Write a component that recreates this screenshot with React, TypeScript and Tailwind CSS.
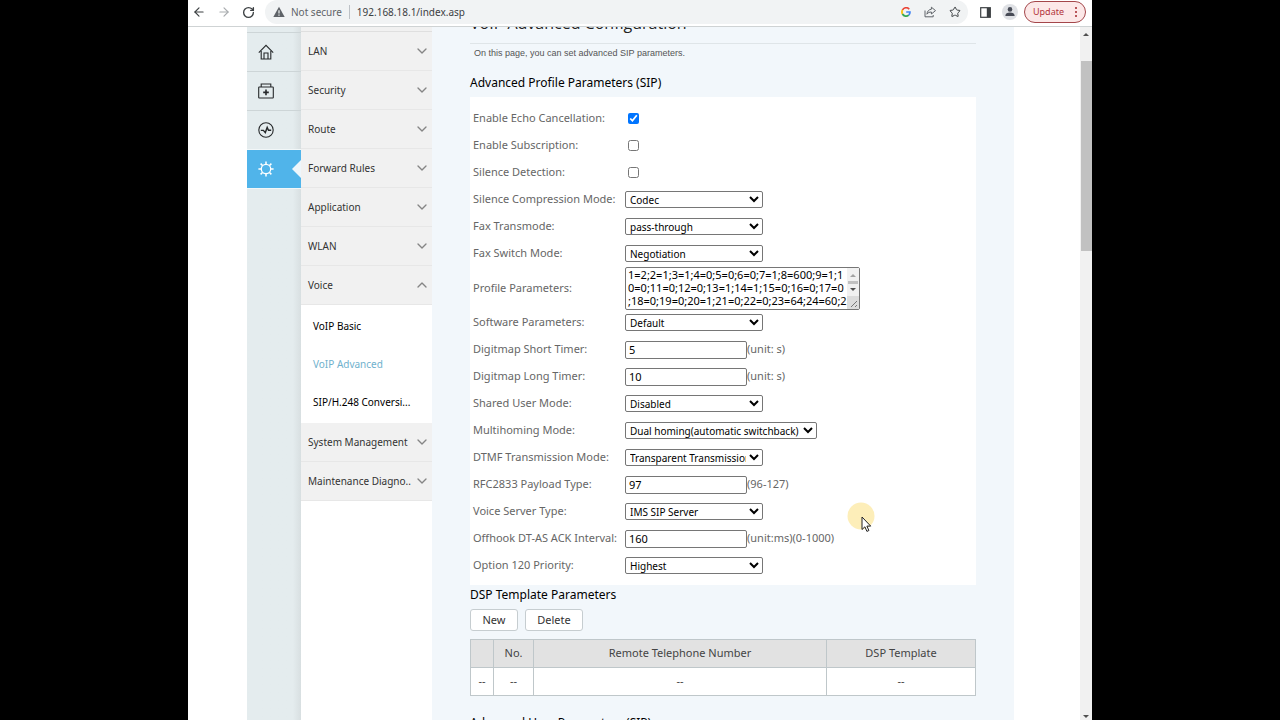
import React from 'react';
import { ArrowLeft, ArrowRight, ChevronDown, ChevronUp, RotateCw, Star } from 'lucide-react';

interface Field {
  id: string;
  label: string;
  type: 'checkbox' | 'select' | 'text' | 'textarea';
  value?: string;
  checked?: boolean;
  wide?: boolean;
  hint?: string;
}

const profileFields: Field[] = [
  { id: 'echo', label: 'Enable Echo Cancellation:', type: 'checkbox', checked: true },
  { id: 'subscription', label: 'Enable Subscription:', type: 'checkbox' },
  { id: 'silence', label: 'Silence Detection:', type: 'checkbox' },
  { id: 'compression', label: 'Silence Compression Mode:', type: 'select', value: 'Codec' },
  { id: 'faxTransmode', label: 'Fax Transmode:', type: 'select', value: 'pass-through' },
  { id: 'faxSwitch', label: 'Fax Switch Mode:', type: 'select', value: 'Negotiation' },
  {
    id: 'profile',
    label: 'Profile Parameters:',
    type: 'textarea',
    value: '1=2;2=1;3=1;4=0;5=0;6=0;7=1;8=600;9=1;1\n0=0;11=0;12=0;13=1;14=1;15=0;16=0;17=0\n;18=0;19=0;20=1;21=0;22=0;23=64;24=60;2',
  },
  { id: 'software', label: 'Software Parameters:', type: 'select', value: 'Default' },
  { id: 'shortTimer', label: 'Digitmap Short Timer:', type: 'text', value: '5', hint: '(unit: s)' },
  { id: 'longTimer', label: 'Digitmap Long Timer:', type: 'text', value: '10', hint: '(unit: s)' },
  { id: 'sharedUser', label: 'Shared User Mode:', type: 'select', value: 'Disabled' },
  { id: 'multihoming', label: 'Multihoming Mode:', type: 'select', value: 'Dual homing(automatic switchback)', wide: true },
  { id: 'dtmf', label: 'DTMF Transmission Mode:', type: 'select', value: 'Transparent Transmission' },
  { id: 'rfc2833', label: 'RFC2833 Payload Type:', type: 'text', value: '97', hint: '(96-127)' },
  { id: 'serverType', label: 'Voice Server Type:', type: 'select', value: 'IMS SIP Server' },
  { id: 'ackInterval', label: 'Offhook DT-AS ACK Interval:', type: 'text', value: '160', hint: '(unit:ms)(0-1000)' },
  { id: 'option120', label: 'Option 120 Priority:', type: 'select', value: 'Highest' },
];

const menuItems = [
  { name: 'LAN' },
  { name: 'Security' },
  { name: 'Route' },
  { name: 'Forward Rules' },
  { name: 'Application' },
  { name: 'WLAN' },
  { name: 'Voice', children: ['VoIP Basic', 'VoIP Advanced', 'SIP/H.248 Conversi...'] },
  { name: 'System Management' },
  { name: 'Maintenance Diagno..' },
];

const IconWarning = () => (
  <svg className="h-3 w-3 shrink-0" viewBox="0 0 12 12">
    <path d="M6 0.8 11.7 11H0.3z" fill="#5f6368" />
    <path d="M6 4.2v3.4M6 8.6v1.2" stroke="#f1f3f4" strokeWidth="1.2" />
  </svg>
);

const IconGoogle = () => (
  <svg className="h-[10px] w-[10px]" viewBox="0 0 10 10" fill="none" strokeWidth="1.7">
    <path d="M8.2 2.2A4 4 0 0 0 1.5 3" stroke="#ea4335" />
    <path d="M1.5 3a4 4 0 0 0 0 4" stroke="#fbbc05" />
    <path d="M1.5 7a4 4 0 0 0 6.2 1.1" stroke="#34a853" />
    <path d="M5.2 5H9a4 4 0 0 1-1.3 3.1" stroke="#4285f4" />
  </svg>
);

const IconShare = () => (
  <svg className="h-3 w-3" viewBox="0 0 12 12" fill="none" stroke="#5f6368" strokeWidth="1" strokeLinejoin="round">
    <path d="M1 4.5v6.3h8.2V9" />
    <path d="M7.4 1.2 11.5 4.6 7.4 8V6C5.4 6 4 6.6 2.9 8.2 3.3 5.2 4.8 3.5 7.4 3.2z" />
  </svg>
);

const IconSidePanel = () => (
  <svg className="h-[11px] w-[11px]" viewBox="0 0 11 11">
    <rect x="0.7" y="0.7" width="9.6" height="9.6" fill="none" stroke="#3c4043" strokeWidth="1.2" />
    <path d="M6.8 1h3.5v9H6.8z" fill="#3c4043" />
  </svg>
);

const IconPerson = () => (
  <svg className="h-4 w-4" viewBox="0 0 16 16">
    <circle cx="8" cy="8" r="8" fill="#dfe1e5" />
    <circle cx="8" cy="5.4" r="2.3" fill="#474b56" />
    <path d="M3.3 12c0-2.3 2-3.4 4.7-3.4s4.7 1.1 4.7 3.4z" fill="#474b56" />
  </svg>
);

const IconHome = () => (
  <svg className="h-4 w-4" viewBox="0 0 16 16" fill="none" stroke="#26292b" strokeWidth="1.1">
    <path d="M0.8 8.6 8 1.4l7.2 7.2" />
    <path d="M3.2 7v8h9.6V7" />
    <path d="M6 15V9h4v6" />
  </svg>
);

const IconFirstAid = () => (
  <svg className="h-4 w-4" viewBox="0 0 16 16" fill="none" stroke="#26292b" strokeWidth="1.1">
    <rect x="0.7" y="4" width="14.6" height="11" rx="0.6" />
    <path d="M3.2 4V1h9.6v3" />
    <path d="M8 6.6v5.6M5.2 9.4h5.6" strokeWidth="1.6" />
  </svg>
);

const IconPulse = () => (
  <svg className="h-4 w-4" viewBox="0 0 16 16" fill="none" stroke="#26292b">
    <circle cx="8" cy="8" r="7.2" strokeWidth="1.1" />
    <path d="M2.8 8.4h2.6l1.9 2.2 1.9-5.2 1.3 2.8h2.7" strokeWidth="1.4" />
  </svg>
);

const IconGear = () => (
  <svg className="h-4 w-4" viewBox="0 0 16 16" fill="none" stroke="#fff">
    <circle cx="8" cy="8" r="4.7" strokeWidth="1.3" />
    <path
      d="M8 .4v2.6M8 13v2.6M.4 8H3M13 8h2.6M2.6 2.6l1.9 1.9M11.5 11.5l1.9 1.9M2.6 13.4l1.9-1.9M11.5 4.5l1.9-1.9"
      strokeWidth="1.5"
    />
  </svg>
);

const BrowserBar = () => (
  <header className="flex h-[27px] shrink-0 items-center border-b border-[#cfd3d4] bg-white pb-[2px] text-[#5f6368]">
    <div className="flex w-[77px] shrink-0 items-center gap-[11px] pl-1">
      <button aria-label="Back"><ArrowLeft size={14} color="#3c4043" /></button>
      <button aria-label="Forward"><ArrowRight size={14} color="#a8abae" /></button>
      <button aria-label="Reload"><RotateCw size={13} strokeWidth={2.5} color="#3c4043" /></button>
    </div>
    <div className="flex h-6 flex-1 items-center rounded-full bg-[#f1f3f4] pr-[7px] pl-2 text-[10px]">
      <IconWarning />
      <span className="ml-[6px] whitespace-nowrap">Not secure</span>
      <span className="mx-[7px] h-[14px] w-px bg-[#bdc1c6]" />
      <input
        type="text"
        aria-label="Address"
        className="min-w-0 flex-1 bg-transparent text-[#3c4043] outline-none"
        defaultValue="192.168.18.1/index.asp"
      />
      <div className="flex items-center gap-[13px]">
        <button aria-label="Google"><IconGoogle /></button>
        <button aria-label="Share"><IconShare /></button>
        <button aria-label="Bookmark"><Star size={12} color="#3c4043" /></button>
      </div>
    </div>
    <div className="flex items-center gap-[11px] pr-[6px] pl-3">
      <button aria-label="Side panel"><IconSidePanel /></button>
      <button aria-label="Profile"><IconPerson /></button>
    </div>
    <button className="mr-[6px] flex h-[22px] w-[62px] items-center justify-between rounded-full border border-[#a4464a] bg-[#fce8e8] pr-2 pl-2 text-[9px] text-[#b3343a]">
      Update
      <svg className="h-[10px] w-[2px]" viewBox="0 0 2 10" fill="#a3262b">
        <circle cx="1" cy="1" r="1" />
        <circle cx="1" cy="5" r="1" />
        <circle cx="1" cy="9" r="1" />
      </svg>
    </button>
  </header>
);

const IconRail = () => (
  <nav aria-label="Sections" className="w-[54px] shrink-0 bg-gradient-to-r from-[#e4ecee] from-85% to-[#d8dfe1] pt-[5px]">
    {[
      { name: 'Home', icon: <IconHome /> },
      { name: 'Diagnose', icon: <IconFirstAid /> },
      { name: 'Status', icon: <IconPulse /> },
    ].map(item => (
      <a
        key={item.name}
        href="#"
        aria-label={item.name}
        className="flex h-[39px] items-center border-t border-[#cdd5d7] pl-[11px]"
      >
        {item.icon}
      </a>
    ))}
    <a href="#" aria-label="Settings" className="flex h-[40px] items-center justify-between border-y border-[#f2f7f8] bg-[#50b4ea] pl-[11px]">
      <IconGear />
      <svg className="h-[18px] w-[9px]" viewBox="0 0 9 18"><path d="M9 0v18L0 9z" fill="#eef6fb" /></svg>
    </a>
  </nav>
);

const SideMenu = () => (
  <nav aria-label="Menu" className="w-[131px] shrink-0 bg-white text-[10px] text-[#333]">
    <div className="h-[5px] border-b border-[#dfdfdf] bg-[#f1f1f1]" />
    {menuItems.map(item => (
      <div key={item.name}>
        <a href="#" className="flex h-[39px] items-center justify-between border-b border-[#e7e7e7] bg-[#f1f1f1] pr-[2px] pl-[7px] whitespace-nowrap">
          {item.name}
          {item.children ? (
            <ChevronUp size={16} strokeWidth={2} color="#858585" className="shrink-0" />
          ) : (
            <ChevronDown size={16} strokeWidth={2} color="#858585" className="shrink-0" />
          )}
        </a>
        {item.children && (
          <div className="py-[2px]">
            {item.children.map(child => (
              <a
                key={child}
                href="#"
                className={`flex h-[38px] items-center pl-3 whitespace-nowrap ${child === 'VoIP Advanced' ? 'text-[#6fb1cd]' : 'text-black'}`}
              >
                {child}
              </a>
            ))}
          </div>
        )}
      </div>
    ))}
  </nav>
);

const FieldControl = ({ field }: { field: Field }) => {
  if (field.type === 'checkbox') {
    return <input id={field.id} type="checkbox" defaultChecked={field.checked} className="ml-[3px] h-[11px] w-[11px]" />;
  }
  if (field.type === 'select') {
    return (
      <select
        id={field.id}
        className={`h-[17px] rounded-xs border border-[#767676] bg-white text-[10px] leading-[13px] text-black ${field.wide ? 'w-[192px]' : 'w-[138px]'}`}
      >
        <option>{field.value}</option>
      </select>
    );
  }
  if (field.type === 'textarea') {
    return (
      <div className="relative flex">
        <textarea
          id={field.id}
          defaultValue={field.value}
          className="h-[43px] w-[235px] resize-none overflow-hidden rounded-xs border border-[#767676] bg-white pl-[2px] text-[11px] leading-[13px] whitespace-pre text-black"
        />
        <div className="absolute top-px right-px bottom-px flex w-3 flex-col items-center bg-[#f1f1f1]">
          <svg className="h-full w-full" viewBox="0 0 12 41">
            <path d="M3 9h6L6 6z" fill="#a3a3a3" />
            <path d="M1 13h10v3H1z" fill="#c1c1c1" />
            <path d="M3 20h6l-3 3z" fill="#505050" />
            <path d="M0 28h12v13H0z" fill="#dcdcdc" />
            <path d="M4 39l6-6M8 39l2-2" stroke="#777" />
          </svg>
        </div>
      </div>
    );
  }
  return <input id={field.id} type="text" defaultValue={field.value} className="h-[18px] w-[122px] rounded-xs border border-[#767676] bg-white px-[3px] text-[11px] text-black" />;
};

const PageContent = () => (
  <main className="min-w-0 flex-1 bg-[#f2f7fb] px-[38px]">
    <h1 className="-mt-4 h-[33px] border-b border-[#dfe5e8] font-['Open_Sans',sans-serif] text-[16px] leading-6 font-medium text-[#222]">
      VoIP Advanced Configuration
    </h1>
    <p className="pl-1 font-['Liberation_Sans',sans-serif] text-[9px] leading-[18px] text-[#555]">
      On this page, you can set advanced SIP parameters.
    </p>
    <h2 className="mt-[11px] text-[12px] leading-5 text-black">Advanced Profile Parameters (SIP)</h2>
    <form className="mt-1 bg-white pt-2 pb-[6px] pl-[3px] text-[11px] text-[#666]">
      {profileFields.map(field => (
        <div key={field.id} className={`flex items-center ${field.type === 'textarea' ? 'h-[42px]' : 'h-[27px]'}`}>
          <label htmlFor={field.id} className="w-[152px] shrink-0 whitespace-nowrap">{field.label}</label>
          <FieldControl field={field} />
          {field.hint && <span>{field.hint}</span>}
        </div>
      ))}
    </form>
    <h2 className="text-[12px] leading-5 text-black">DSP Template Parameters</h2>
    <div className="mt-1 flex gap-[7px] text-[11px] text-[#333]">
      <button className="h-[22px] w-12 rounded-[3px] border border-[#c6cdd0] bg-white">New</button>
      <button className="h-[22px] w-[58px] rounded-[3px] border border-[#c6cdd0] bg-white">Delete</button>
    </div>
    <table className="mt-2 w-full table-fixed border-collapse text-center text-[11px] text-[#444]">
      <thead>
        <tr className="h-7 bg-[#e2e2e2]">
          <th className="w-[23px] border border-[#bfc7ca]" />
          <th className="w-10 border border-[#bfc7ca] font-normal">No.</th>
          <th className="border border-[#bfc7ca] font-normal">Remote Telephone Number</th>
          <th className="w-[149px] border border-[#bfc7ca] font-normal">DSP Template</th>
        </tr>
      </thead>
      <tbody>
        <tr className="h-7 bg-white">
          {[0, 1, 2, 3].map(col => (
            <td key={col} className="border border-[#bfc7ca]">--</td>
          ))}
        </tr>
      </tbody>
    </table>
    <h2 className="mt-[17px] text-[12px] leading-5 text-black">Advanced User Parameters (SIP)</h2>
  </main>
);

const Scrollbar = () => (
  <div className="flex w-3 shrink-0 flex-col items-center bg-[#f1f1f1]">
    <svg className="h-[34px] w-3 shrink-0" viewBox="0 0 12 34"><path d="M3 9h6L6 6z" fill="#505050" /></svg>
    <div className="h-[190px] w-[11px] shrink-0 bg-[#c1c1c1]" />
    <svg className="mt-auto h-[6px] w-3 shrink-0" viewBox="0 0 12 6"><path d="M3 1h6L6 4z" fill="#505050" /></svg>
  </div>
);

const App: React.FC = () => (
  <div className="h-screen overflow-hidden bg-black font-['Noto_Sans',sans-serif]">
    <div className="relative mx-[188px] flex h-full flex-col bg-white">
      <BrowserBar />
      <div className="flex min-h-0 flex-1">
        <div className="flex min-w-0 flex-1 overflow-hidden pr-[66px] pl-[59px]">
          <IconRail />
          <SideMenu />
          <PageContent />
        </div>
        <Scrollbar />
      </div>
      {/* mouse pointer with its click highlight */}
      <div className="pointer-events-none absolute top-[502px] left-[659px]">
        <svg className="h-8 w-7" viewBox="0 0 28 32">
          <circle cx="14" cy="14" r="13.5" fill="#fdeeb9" />
          <path d="M15 15v12.5l2.9-2.7 2 4.6 2-.9-2-4.4h3.8z" fill="#fff" stroke="#222" strokeWidth="1" />
        </svg>
      </div>
    </div>
  </div>
);

export default App;
